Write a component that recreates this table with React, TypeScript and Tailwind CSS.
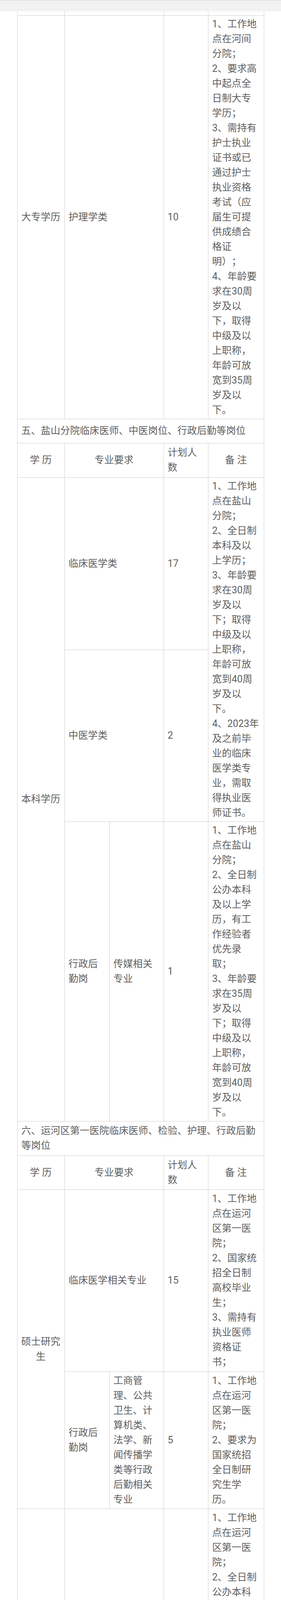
import React from 'react';

type CellProps = {
  children?: React.ReactNode;
  className?: string;
  colSpan?: number;
  rowSpan?: number;
};

// plain bordered table cell
const Cell = ({ children, className = '', colSpan, rowSpan }: CellProps) => (
  <td
    colSpan={colSpan}
    rowSpan={rowSpan}
    className={`border border-[#cfcfcf] px-[10px] py-[3px] ${className}`}
  >
    {children}
  </td>
);

// 备注 column: every numbered item starts on its own line
const Notes = ({ items, rowSpan }: { items: string[]; rowSpan?: number }) => (
  <td rowSpan={rowSpan} className="border border-[#cfcfcf] pl-[10px] pr-[9px] py-[3px]">
    {items.map((t) => (
      <div key={t}>{t}</div>
    ))}
  </td>
);

const HeadRow = ({ h }: { h: string }) => (
  <tr className={h}>
    <Cell className="text-center px-[8px]">学 历</Cell>
    <Cell colSpan={2} className="text-center">
      专业要求
    </Cell>
    <Cell>计划人数</Cell>
    <Cell className="text-center">备 注</Cell>
  </tr>
);

const Section = ({ title, h }: { title: string; h: string }) => (
  <tr className={h}>
    <Cell colSpan={5}>{title}</Cell>
  </tr>
);

const adminMajor = '工商管理、公共卫生、计算机类、法学、新闻传播学类等行政后勤相关专业';

const App = () => {
  return (
    <div className="h-[6885px] overflow-hidden flex flex-col bg-white font-[Roboto,'Noto_Sans_CJK_SC',sans-serif]">
      {/* top app bar strip */}
      <div className="h-[29px] shrink-0 bg-[#f2f2f2] border-t-2 border-[#e4e4e4]" />

      <table className="mx-auto w-[632px] shrink-0 table-fixed border-collapse text-[25px] leading-[38px] text-[#5f5f5f] [text-spacing-trim:space-all] [text-autospace:no-autospace]">
        <colgroup>
          <col className="w-[121px]" />
          <col className="w-[115px]" />
          <col className="w-[139px]" />
          <col className="w-[114px]" />
          <col className="w-[143px]" />
        </colgroup>
        <tbody>
          {/* tail of the previous row, scrolled off */}
          <tr className="h-[10px]">
            <td className="border border-t-0 border-[#cfcfcf] p-0" />
            <td colSpan={2} className="border border-t-0 border-[#cfcfcf] p-0" />
            <td className="border border-t-0 border-[#cfcfcf] p-0" />
            <td className="border border-t-0 border-[#cfcfcf] p-0" />
          </tr>

          <tr className="h-[1032px]">
            <Cell className="text-center px-[8px]">大专学历</Cell>
            <Cell colSpan={2}>护理学类</Cell>
            <Cell>10</Cell>
            <Notes
              items={[
                '1、工作地点在河间分院；',
                '2、要求高中起点全日制大专学历；',
                '3、需持有护士执业证书或已通过护士执业资格考试（应届生可提供成绩合格证明）；',
                '4、年龄要求在30周岁及以下，取得中级及以上职称，年龄可放宽到35周岁及以下。',
              ]}
            />
          </tr>

          {/* 五 */}
          <Section h="h-[62px]" title="五、盐山分院临床医师、中医岗位、行政后勤等岗位" />
          <HeadRow h="h-[88px]" />
          <tr className="h-[441px]">
            <Cell rowSpan={3} className="text-center px-[8px]">
              本科学历
            </Cell>
            <Cell colSpan={2}>临床医学类</Cell>
            <Cell>17</Cell>
            <Notes
              rowSpan={2}
              items={[
                '1、工作地点在盐山分院；',
                '2、全日制本科及以上学历；',
                '3、年龄要求在30周岁及以下；取得中级及以上职称，年龄可放宽到40周岁及以下。',
                '4、2023年及之前毕业的临床医学类专业，需取得执业医师证书。',
              ]}
            />
          </tr>
          <tr className="h-[440px]">
            <Cell colSpan={2}>中医学类</Cell>
            <Cell>2</Cell>
          </tr>
          <tr className="h-[767px]">
            <Cell>行政后勤岗</Cell>
            <Cell>传媒相关专业</Cell>
            <Cell>1</Cell>
            <Notes
              items={[
                '1、工作地点在盐山分院；',
                '2、全日制公办本科及以上学历，有工作经验者优先录取；',
                '3、年龄要求在35周岁及以下；取得中级及以上职称，年龄可放宽到40周岁及以下。',
              ]}
            />
          </tr>

          {/* 六 */}
          <Section h="h-[88px]" title="六、运河区第一医院临床医师、检验、护理、行政后勤等岗位" />
          <HeadRow h="h-[87px]" />
          <tr className="h-[466px]">
            <Cell rowSpan={2} className="text-center px-[8px]">
              硕士研究生
            </Cell>
            <Cell colSpan={2}>临床医学相关专业</Cell>
            <Cell>15</Cell>
            <Notes
              items={['1、工作地点在运河区第一医院；', '2、国家统招全日制高校毕业生；', '3、需持有执业医师资格证书；']}
            />
          </tr>
          <tr className="h-[351px]">
            <Cell>行政后勤岗</Cell>
            <Cell>{adminMajor}</Cell>
            <Cell>5</Cell>
            <Notes items={['1、工作地点在运河区第一医院；', '2、要求为国家统招全日制研究生学历。']} />
          </tr>
          <tr className="h-[694px]">
            <Cell rowSpan={2} className="text-center px-[8px]">
              本科学历
            </Cell>
            <Cell colSpan={2}>医学检验技术</Cell>
            <Cell>2</Cell>
            <Notes
              items={[
                '1、工作地点在运河区第一医院；',
                '2、全日制公办本科及以上学历；',
                '3、年龄要求在30周岁及以下；取得中级及以上职称，年龄可放宽到40周岁及以下。',
              ]}
            />
          </tr>
          <tr className="h-[1031px]">
            <Cell colSpan={2}>护理学类</Cell>
            <Cell>20</Cell>
            <Notes
              items={[
                '1、工作地点在运河区第一医院；',
                '2、全日制本科及以上学历；',
                '3、需持有护士执业证书或已通过护士执业资格考试（应届生可提供成绩合格证明）；',
                '4、年龄要求在30周岁及以下；取得中级及以上职称，年龄可放宽到35周岁及以下。',
              ]}
            />
          </tr>

          {/* 七 */}
          <Section h="h-[62px]" title="七、沧州市中医院行政后勤岗位" />
          <HeadRow h="h-[88px]" />
          <tr className="h-[352px]">
            <Cell className="text-center px-[8px]">硕士研究生</Cell>
            <Cell>行政后勤岗</Cell>
            <Cell>{adminMajor}</Cell>
            <Cell>5</Cell>
            <Notes items={['1、工作地点在沧州市中医院；', '2、要求为国家统招全日制研究生学历。']} />
          </tr>

          {/* 八 */}
          <Section h="h-[63px]" title="八、沧州市眼科医院行政后勤岗位" />
          <HeadRow h="h-[87px]" />
          <tr className="h-[351px]">
            <Cell className="pr-[6px]">硕士研究生</Cell>
            <Cell>行政后勤岗</Cell>
            <Cell>{adminMajor}</Cell>
            <Cell>2</Cell>
            <Notes items={['1、工作地点在沧州市眼科医院；', '2、要求为国家统招全日制研究生学历。']} />
          </tr>

          <tr className="h-[238px]">
            <Cell colSpan={5}>
              <div>1、其他专业或相近专业优秀硕士学历毕业生也可投递简历，医院会结合实际情况进行筛选；</div>
              <div>2、根据实际应聘人员的素质进行考核，录用人员可能会低于计划人数；</div>
              <div>3、卫生专业本科学历，当年取得规培证人员，可按照应届研究生学历对待，进行报名。</div>
            </Cell>
          </tr>
        </tbody>
      </table>

      <div className="flex-1" />
      <div className="h-[7px] shrink-0 bg-[#f2f2f2]" />
    </div>
  );
};

export default App;
